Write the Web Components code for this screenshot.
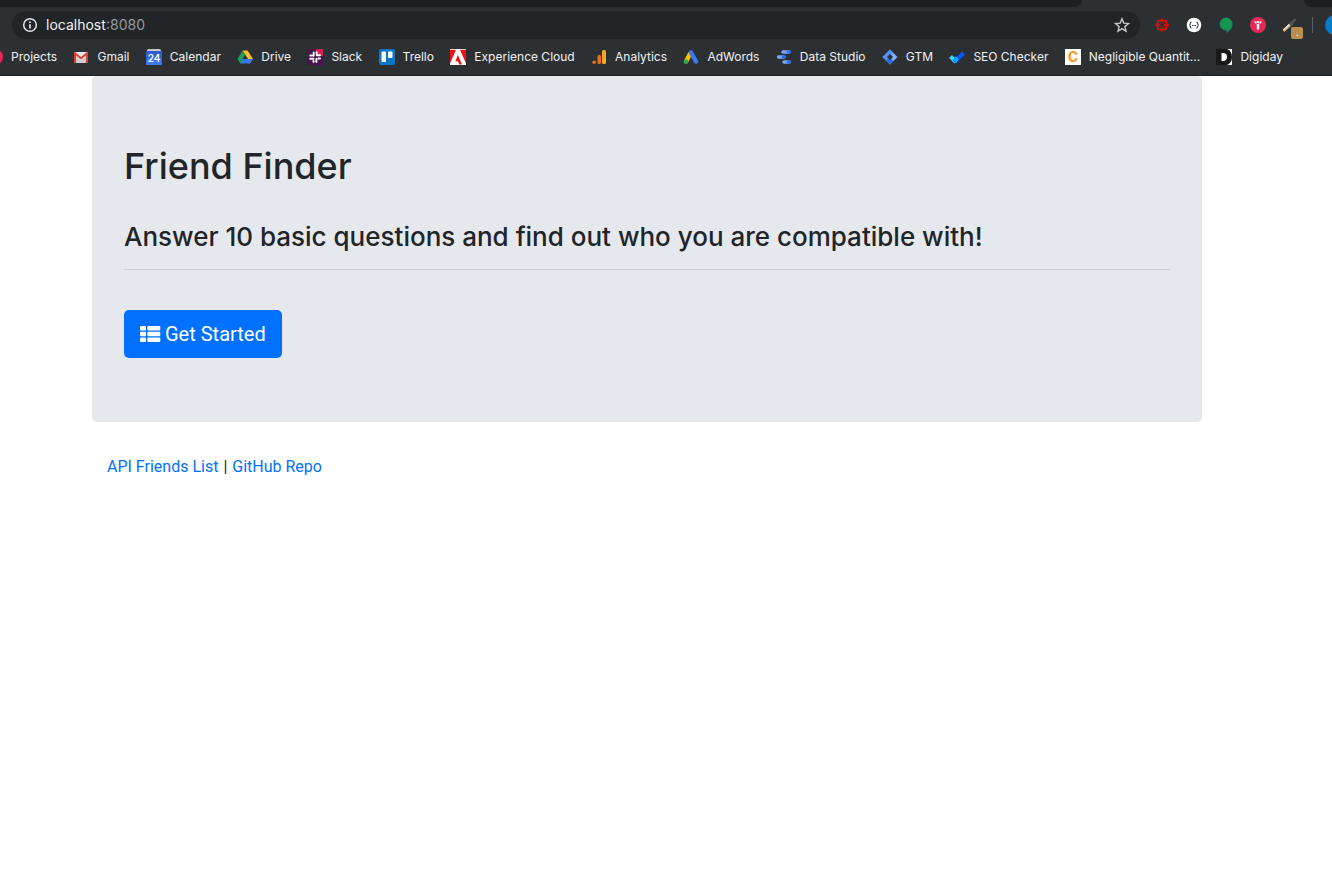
<!DOCTYPE html>
<html lang="en">
<head>
<meta charset="utf-8">
<title>Friend Finder</title>
<style>
  body { margin: 0; background: #fff; font-family: Roboto, "Liberation Sans", sans-serif; color: #212529; overflow-x: hidden; }
</style>
</head>
<body>
<browser-chrome>
  <address-bar slot="address" host="localhost" port=":8080"></address-bar>
  <extension-row slot="extensions"></extension-row>
  <bookmark-bar slot="bookmarks">
    <bookmark-item icon="projects">Projects</bookmark-item>
    <bookmark-item icon="gmail">Gmail</bookmark-item>
    <bookmark-item icon="calendar">Calendar</bookmark-item>
    <bookmark-item icon="drive">Drive</bookmark-item>
    <bookmark-item icon="slack">Slack</bookmark-item>
    <bookmark-item icon="trello">Trello</bookmark-item>
    <bookmark-item icon="adobe">Experience Cloud</bookmark-item>
    <bookmark-item icon="analytics">Analytics</bookmark-item>
    <bookmark-item icon="adwords">AdWords</bookmark-item>
    <bookmark-item icon="studio">Data Studio</bookmark-item>
    <bookmark-item icon="gtm">GTM</bookmark-item>
    <bookmark-item icon="seo">SEO Checker</bookmark-item>
    <bookmark-item icon="negligible">Negligible Quantit...</bookmark-item>
    <bookmark-item icon="digiday">Digiday</bookmark-item>
  </bookmark-bar>
</browser-chrome>
<page-container>
  <jumbo-tron>
    <span slot="title">Friend Finder</span>
    <span slot="lead">Answer 10 basic questions and find out who you are compatible with!</span>
    <start-button slot="action">Get Started</start-button>
  </jumbo-tron>
  <footer-links></footer-links>
</page-container>

<script>
const svg = (body, w = 16, h = 16) =>
  `<svg width="${w}" height="${h}" viewBox="0 0 ${w} ${h}" aria-hidden="true">${body}</svg>`;

const ICONS = {
  projects: '<circle cx="8" cy="8" r="8" fill="#e8285a"/>',
  gmail: '<rect x="1" y="3" width="14" height="11" rx="1" fill="#e8e8e8"/><path d="M4 8l-1 6h10l-1-6-4 3z" fill="#cfcfcf"/><path d="M1 14V3.800Q1 3 2 3l6 5 6-5q1 0 1 .8V14h-2.200V6.500L8 10.500 3.200 6.500V14z" fill="#d93f33"/>',
  calendar: '<path d="M1 1.500Q1 0 2.500 0h11Q15 0 15 1.500V3H1z" fill="#c8c8c8"/><rect y="2" width="16" height="14" rx="1" fill="#2c5fd3"/><path d="M1 9h14l1 7H0z" fill="#3c78ee"/><text x="8" y="13" text-anchor="middle" font-family="Inter, sans-serif" font-weight="600" font-size="10" fill="#fff">24</text>',
  drive: '<path d="M5.500 1.500h5L16 10h-5z" fill="#fbc02d"/><path d="M5.500 1.500L8 6 3.200 14.500.5 10z" fill="#1b9e55"/><path d="M5.500 10H16l-2.700 4.500H3z" fill="#3b78e7"/>',
  slack: '<rect width="16" height="16" fill="#48154b"/><path d="M9 0h7v7H9z" fill="#d8224f"/><g stroke="#fff" stroke-width="1.900" stroke-linecap="round"><path d="M6.700 3.500v3.300M9.800 6.300h3.200M9.400 9.600v3.300M3.200 9.700h3.300M3.300 6.500h1.800M9.600 3.200v1.500M6.500 11.900v1M11.500 9.500h1.500"/></g>',
  trello: '<rect width="16" height="16" rx="2" fill="#0b76c5"/><rect x="2.500" y="2.500" width="4.500" height="10.500" rx="1" fill="#fff"/><rect x="9" y="2.500" width="4.500" height="6.500" rx="1" fill="#fff"/>',
  adobe: '<rect width="16" height="16" fill="#fff"/><path d="M0 .8h6L0 14.500zM10 .8h6v13.700zM8 6l4 9.500H9.200L8 12.300H5.300z" fill="#ed1111"/>',
  analytics: '<rect x="11" y="1" width="4" height="14" rx="1.500" fill="#f9a825"/><rect x="6.500" y="6" width="3.500" height="9" rx="1.500" fill="#e8711a"/><circle cx="3.200" cy="13.200" r="1.800" fill="#e8711a"/>',
  adwords: '<path d="M7.500 4L3 12.500" stroke="#fbbc04" stroke-width="4.500"/><path d="M8 3.500l5 9" stroke="#3c78f0" stroke-width="4.500" stroke-linecap="round"/><circle cx="3" cy="12.700" r="2.400" fill="#34a853"/>',
  studio: '<g stroke-linecap="round" stroke-width="3.400"><path d="M7 3h6M2.500 8h5M8 13h5" stroke="#78a5f5"/><path d="M12.500 3h1M7.500 8h1M12.500 13h1" stroke="#2f6de8"/></g>',
  gtm: '<path d="M8 .5L15.500 8 8 15.500.5 8z" fill="#84adf7"/><path d="M8 .5l3.200 3.200L4 11.300.5 8z" fill="#5590f5"/><path d="M4 11.200L7.500 8l4 4L8 15.500z" fill="#2b6be8"/><path d="M8 5l3 3-3 3-3-3z" fill="#2d3033"/>',
  seo: '<path d="M1.500 7.500l5.500 5.500" stroke="#35d6fa" stroke-width="4"/><path d="M5.500 13L14.500 4" stroke="#0b55ff" stroke-width="4"/><path d="M4 10.200L7 7.200 9.700 10 7 14.200z" fill="#10a8ff"/>',
  negligible: '<rect width="16" height="16" fill="#fff"/><text x="8" y="13" text-anchor="middle" font-family="Roboto, sans-serif" font-weight="700" font-size="15" fill="#ff9210">C</text>',
  digiday: '<rect width="16" height="16" fill="#fff"/><path d="M0 0h11q5 2 5 8t-5 8H0z" fill="#191919"/><path d="M5.500 4H7q4 0 4 4t-4 4H5.500z" fill="#fff"/>'
};

function define(name, html, setup) {
  const template = document.createElement('template');
  template.innerHTML = html;
  customElements.define(name, class extends HTMLElement {
    constructor() {
      super();
      this.attachShadow({ mode: 'open' }).append(template.content.cloneNode(true));
    }
    connectedCallback() { if (setup) setup(this, this.shadowRoot); }
  });
}

define('browser-chrome', `
  <style>
    :host { display: block; background: #2d3033; border-bottom: 1px solid #1b1c1f; font-family: Inter, "Liberation Sans", sans-serif; overflow: hidden; }
    .tabs { display: grid; grid-template-columns: 1082fr 222px 28px; height: 7px; }
    .tabs span { background: #1e1f23; }
    .tabs .left { border-bottom-right-radius: 7px; }
    .tabs .right { border-bottom-left-radius: 7px; }
    .toolbar { display: flex; align-items: center; height: 36px; padding-left: 12px; }
    slot[name=address] { display: block; flex: 1; }
  </style>
  <div class="tabs"><span class="left"></span><i></i><span class="right"></span></div>
  <div class="toolbar"><slot name="address"></slot><slot name="extensions"></slot></div>
  <slot name="bookmarks"></slot>`);

define('address-bar', `
  <style>
    :host { display: flex; align-items: center; gap: 8px; height: 28px; padding: 0 10px; border-radius: 14px; background: #212528; }
    .field { display: flex; flex: 1; }
    input { border: 0; padding: 0; margin: 0; outline: 0; background: none; font: 14px/20px Inter, "Liberation Sans", sans-serif; }
    .host { width: 60px; field-sizing: content; color: #f1f2f3; }
    .port { flex: 1; color: #96999d; }
    button { display: flex; border: 0; padding: 0; background: none; }
    svg { display: block; }
  </style>
  <button aria-label="View site information">${svg('<circle cx="8" cy="8" r="6.300" fill="none" stroke="#e3e5e7" stroke-width="1.500"/><path d="M8 7.200v4.300M8 4.500v1.600" stroke="#e3e5e7" stroke-width="1.700"/>')}</button>
  <div class="field"><input class="host" aria-label="Host"><input class="port" aria-label="Port"></div>
  <button aria-label="Bookmark this page">${svg('<path d="M8 1.800l1.800 4.300 4.700.4-3.600 3.100 1.100 4.600L8 11.700l-4 2.500 1.100-4.600L1.500 6.500l4.700-.4z" fill="none" stroke="#c4c7ca" stroke-width="1.400"/>')}</button>`,
  (el, root) => {
    root.querySelector('.host').value = el.getAttribute('host');
    root.querySelector('.port').value = el.getAttribute('port');
  });

define('extension-row', `
  <style>
    :host { display: flex; align-items: center; gap: 16px; padding-left: 14px; margin-right: -11px; }
    button { display: flex; width: 16px; height: 28px; align-items: center; justify-content: center; border: 0; padding: 0; background: none; position: relative; }
    svg { display: block; flex: none; }
    .badge { position: absolute; left: 9px; bottom: 0; width: 12px; height: 12px; border-radius: 2px; background: #b99052; color: #fff; font: 500 9px/12px Inter, sans-serif; }
    .divider { width: 1px; height: 16px; margin: 0 -2px; background: #5d6064; }
  </style>
  <button aria-label="Tag inspector">${svg('<rect x="3.500" y="3.500" width="9" height="9" rx="1.500" fill="none" stroke="#ef0808" stroke-width="1.600"/><path d="M8 1v5M8 10v5M1 8h5M10 8h5" stroke="#ef0808" stroke-width="1.400"/><path d="M5.500 5.500l1.500 1.500M10.500 5.500L9 7M5.500 10.500L7 9M10.500 10.500L9 9" stroke="#c00808"/>')}</button>
  <button aria-label="JSON viewer">${svg('<circle cx="8" cy="8" r="7.300" fill="#fff"/><path d="M5.500 5Q4.300 5 4.300 6.500T3.300 8q1 0 1 1.500T5.500 11M10.500 5q1.200 0 1.200 1.500T12.700 8q-1 0-1 1.500T10.500 11" fill="none" stroke="#2d3033" stroke-width="1.100"/><path d="M6 8.500h1M7.500 8.500h1M9 8.500h1" stroke="#2d3033"/>')}</button>
  <button aria-label="Hangouts">${svg('<path d="M8 .5a6.500 6.500 0 0 1 6.500 6.500c0 4-2.500 6.500-6 9v-2.500A6.500 6.500 0 1 1 8 .5z" fill="#169252"/>')}</button>
  <button aria-label="Tag manager">${svg('<circle cx="8" cy="8" r="8" fill="#e62a58"/><path d="M6.800 7h2.400v5.500H6.800zM4 4.500h2.600V6.800H5.500zM7.200 4h1.700v2.200H7.200zM9.500 4.500H12L10.500 6.800H9.500z" fill="#fff"/>')}</button>
  <button aria-label="Color picker">${svg('<path d="M1.500 14L8 8" stroke="#c7a66d" stroke-width="3"/><path d="M1.500 13L8 7" stroke="#eee8dc" stroke-width="1.500"/><path d="M8 8l5.500-6M7.500 5.500l3 3" stroke="#505354" stroke-width="2.500"/>')}<span class="badge">.</span></button>
  <span class="divider"></span>
  <button aria-label="Profile">${svg('<circle cx="10" cy="10" r="10" fill="#087bc8"/>', 20, 20)}</button>`);

define('bookmark-bar', `
  <style>
    :host { display: flex; justify-content: space-between; height: 32px; margin-left: -13px; padding-right: 49px; }
  </style>
  <slot></slot>`);

define('bookmark-item', `
  <style>
    :host { display: block; flex: none; height: 28px; }
    a { display: flex; align-items: center; gap: 8px; height: 28px; color: #f0f1f2; font-size: 12px; line-height: 16px; text-decoration: none; white-space: nowrap; }
    svg { display: block; }
  </style>
  <a href="#"><span class="icon"></span><slot></slot></a>`,
  (el, root) => { root.querySelector('.icon').innerHTML = svg(ICONS[el.getAttribute('icon')]); });

define('page-container', `
  <style>
    :host { display: block; padding: 0 130px 0 92px; }
  </style>
  <slot></slot>`);

define('jumbo-tron', `
  <style>
    :host { display: block; padding: 64px 32px; margin-bottom: 32px; border-radius: 5px; background: #e5e8ed; }
    h1, h3 { margin: 0; font-family: Inter, "Liberation Sans", sans-serif; font-weight: 500; }
    h1 { padding-top: 2px; margin-bottom: 30px; font-size: 36px; line-height: 48px; }
    h3 { font-size: 26px; line-height: 34px; }
    hr { margin: 15px 0 40px; border: 0; border-top: 1px solid #cbced3; }
  </style>
  <h1><slot name="title"></slot></h1>
  <h3><slot name="lead"></slot></h3>
  <hr>
  <slot name="action"></slot>`);

define('start-button', `
  <style>
    :host { display: flex; }
    button { display: flex; align-items: center; gap: 4px; height: 48px; padding: 0 16px; border: 0; border-radius: 5px; background: #0070ff; color: #fff; font: 400 20px/30px Roboto, sans-serif; cursor: pointer; }
  </style>
  <button type="button">${svg('<g fill="#fff"><rect width="6" height="4.500" rx="1"/><rect x="7.300" width="13" height="4.500" rx="1"/><rect y="5.700" width="6" height="4.500" rx="1"/><rect x="7.300" y="5.700" width="13" height="4.500" rx="1"/><rect y="11.500" width="6" height="4.500" rx="1"/><rect x="7.300" y="11.500" width="13" height="4.500" rx="1"/></g>', 21, 17)}<slot></slot></button>`);

define('footer-links', `
  <style>
    :host { display: flex; gap: 5px; padding: 0 15px; font-size: 16px; line-height: 26px; }
    a { color: #0070ff; text-decoration: none; }
  </style>
  <a href="#friends">API Friends List</a><span>|</span><a href="#repo">GitHub Repo</a>`);
</script>
</body>
</html>
